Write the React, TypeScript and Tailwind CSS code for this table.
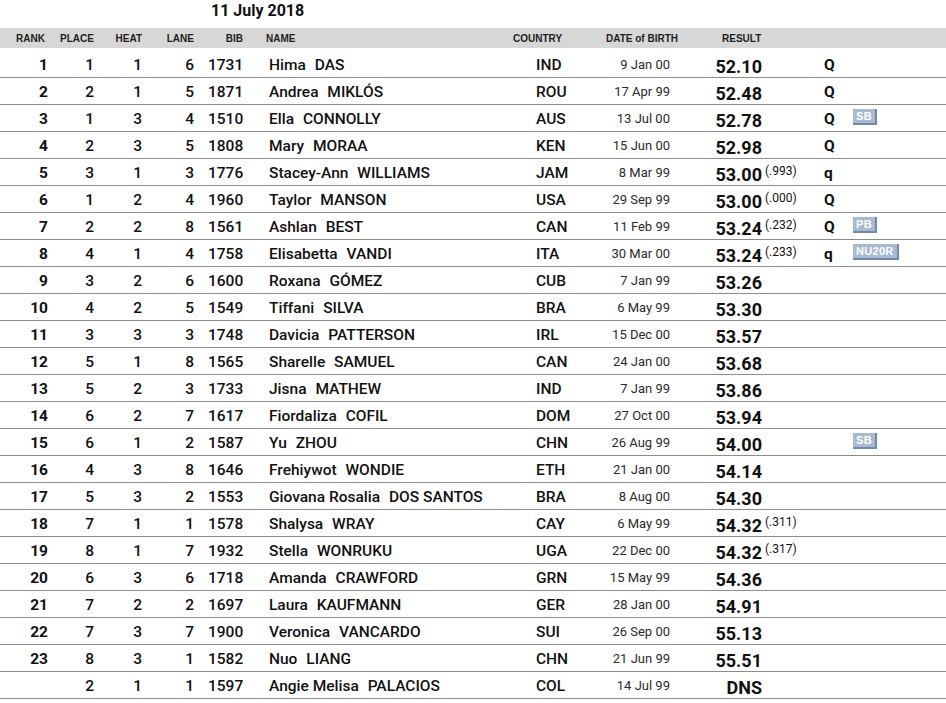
type Row = {
  rank?: number;
  place: number;
  heat: number;
  lane: number;
  bib: number;
  first: string;
  last: string;
  country: string;
  dob: string;
  result: string;
  tie?: string;
  q?: string;
  badge?: string;
};

const rows: Row[] = [
  { rank: 1, place: 1, heat: 1, lane: 6, bib: 1731, first: 'Hima', last: 'DAS', country: 'IND', dob: '9 Jan 00', result: '52.10', q: 'Q' },
  { rank: 2, place: 2, heat: 1, lane: 5, bib: 1871, first: 'Andrea', last: 'MIKLÓS', country: 'ROU', dob: '17 Apr 99', result: '52.48', q: 'Q' },
  { rank: 3, place: 1, heat: 3, lane: 4, bib: 1510, first: 'Ella', last: 'CONNOLLY', country: 'AUS', dob: '13 Jul 00', result: '52.78', q: 'Q', badge: 'SB' },
  { rank: 4, place: 2, heat: 3, lane: 5, bib: 1808, first: 'Mary', last: 'MORAA', country: 'KEN', dob: '15 Jun 00', result: '52.98', q: 'Q' },
  { rank: 5, place: 3, heat: 1, lane: 3, bib: 1776, first: 'Stacey-Ann', last: 'WILLIAMS', country: 'JAM', dob: '8 Mar 99', result: '53.00', tie: '(.993)', q: 'q' },
  { rank: 6, place: 1, heat: 2, lane: 4, bib: 1960, first: 'Taylor', last: 'MANSON', country: 'USA', dob: '29 Sep 99', result: '53.00', tie: '(.000)', q: 'Q' },
  { rank: 7, place: 2, heat: 2, lane: 8, bib: 1561, first: 'Ashlan', last: 'BEST', country: 'CAN', dob: '11 Feb 99', result: '53.24', tie: '(.232)', q: 'Q', badge: 'PB' },
  { rank: 8, place: 4, heat: 1, lane: 4, bib: 1758, first: 'Elisabetta', last: 'VANDI', country: 'ITA', dob: '30 Mar 00', result: '53.24', tie: '(.233)', q: 'q', badge: 'NU20R' },
  { rank: 9, place: 3, heat: 2, lane: 6, bib: 1600, first: 'Roxana', last: 'GÓMEZ', country: 'CUB', dob: '7 Jan 99', result: '53.26' },
  { rank: 10, place: 4, heat: 2, lane: 5, bib: 1549, first: 'Tiffani', last: 'SILVA', country: 'BRA', dob: '6 May 99', result: '53.30' },
  { rank: 11, place: 3, heat: 3, lane: 3, bib: 1748, first: 'Davicia', last: 'PATTERSON', country: 'IRL', dob: '15 Dec 00', result: '53.57' },
  { rank: 12, place: 5, heat: 1, lane: 8, bib: 1565, first: 'Sharelle', last: 'SAMUEL', country: 'CAN', dob: '24 Jan 00', result: '53.68' },
  { rank: 13, place: 5, heat: 2, lane: 3, bib: 1733, first: 'Jisna', last: 'MATHEW', country: 'IND', dob: '7 Jan 99', result: '53.86' },
  { rank: 14, place: 6, heat: 2, lane: 7, bib: 1617, first: 'Fiordaliza', last: 'COFIL', country: 'DOM', dob: '27 Oct 00', result: '53.94' },
  { rank: 15, place: 6, heat: 1, lane: 2, bib: 1587, first: 'Yu', last: 'ZHOU', country: 'CHN', dob: '26 Aug 99', result: '54.00', badge: 'SB' },
  { rank: 16, place: 4, heat: 3, lane: 8, bib: 1646, first: 'Frehiywot', last: 'WONDIE', country: 'ETH', dob: '21 Jan 00', result: '54.14' },
  { rank: 17, place: 5, heat: 3, lane: 2, bib: 1553, first: 'Giovana Rosalia', last: 'DOS SANTOS', country: 'BRA', dob: '8 Aug 00', result: '54.30' },
  { rank: 18, place: 7, heat: 1, lane: 1, bib: 1578, first: 'Shalysa', last: 'WRAY', country: 'CAY', dob: '6 May 99', result: '54.32', tie: '(.311)' },
  { rank: 19, place: 8, heat: 1, lane: 7, bib: 1932, first: 'Stella', last: 'WONRUKU', country: 'UGA', dob: '22 Dec 00', result: '54.32', tie: '(.317)' },
  { rank: 20, place: 6, heat: 3, lane: 6, bib: 1718, first: 'Amanda', last: 'CRAWFORD', country: 'GRN', dob: '15 May 99', result: '54.36' },
  { rank: 21, place: 7, heat: 2, lane: 2, bib: 1697, first: 'Laura', last: 'KAUFMANN', country: 'GER', dob: '28 Jan 00', result: '54.91' },
  { rank: 22, place: 7, heat: 3, lane: 7, bib: 1900, first: 'Veronica', last: 'VANCARDO', country: 'SUI', dob: '26 Sep 00', result: '55.13' },
  { rank: 23, place: 8, heat: 3, lane: 1, bib: 1582, first: 'Nuo', last: 'LIANG', country: 'CHN', dob: '21 Jun 99', result: '55.51' },
  { place: 2, heat: 1, lane: 1, bib: 1597, first: 'Angie Melisa', last: 'PALACIOS', country: 'COL', dob: '14 Jul 99', result: 'DNS' },
];

function Badge({ label }: { label: string }) {
  return (
    <span className="block h-[16px] px-[3px] leading-[14px] bg-[#a6bad4] border-r-2 border-b-2 border-[#7089ab] text-white text-[11px] font-bold font-['Liberation_Sans',sans-serif] tracking-[0.3px]">
      {label}
    </span>
  );
}

export default function App() {
  return (
    <div className="w-[946px] h-[703px] bg-white overflow-hidden text-[#111] font-['Roboto',sans-serif]">
      <div className="h-[28px] pl-[211px] leading-[22px] text-[16px] font-bold">11 July 2018</div>

      <div className="h-[20px] bg-[#d7d7d7] flex items-center text-[10px] font-bold text-[#1e1e1e] font-['Liberation_Sans',sans-serif]">
        <div className="w-[45px] text-right">RANK</div>
        <div className="w-[49px] text-right">PLACE</div>
        <div className="w-[48px] text-right">HEAT</div>
        <div className="w-[52px] text-right">LANE</div>
        <div className="w-[49px] text-right">BIB</div>
        <div className="w-[270px] pl-[23px]">NAME</div>
        <div className="w-[93px]">COUNTRY</div>
        <div className="w-[116px]">DATE of BIRTH</div>
        <div>RESULT</div>
      </div>

      <div className="h-[3px]" />

      {rows.map((r) => (
        <div key={r.bib} className="h-[27px] pt-[4px] border-b border-[#8c8c8c] flex items-center text-[15.5px] font-medium">
          <div className="w-[48px] text-right font-bold">{r.rank ?? ''}</div>
          <div className="w-[46px] text-right">{r.place}</div>
          <div className="w-[48px] text-right">{r.heat}</div>
          <div className="w-[52px] text-right">{r.lane}</div>
          <div className="w-[75px] pl-[14px]">{r.bib}</div>
          <div className="w-[267px] whitespace-nowrap">
            {r.first} <span className="ml-[5px]">{r.last}</span>
          </div>
          <div className="w-[64px]">{r.country}</div>
          <div className="w-[70px] text-right text-[13px] font-normal text-[#2a2a2a] -mt-[3px]">{r.dob}</div>
          <div className="w-[92px] text-right text-[18px] font-bold pt-[1px]">{r.result}</div>
          <div className="w-[62px] pl-[3px] text-[12px] font-normal -mt-[6px]">{r.tie ?? ''}</div>
          <div className="w-[29px] font-bold">{r.q ?? ''}</div>
          <div className="self-start">{r.badge ? <Badge label={r.badge} /> : null}</div>
        </div>
      ))}
    </div>
  );
}
